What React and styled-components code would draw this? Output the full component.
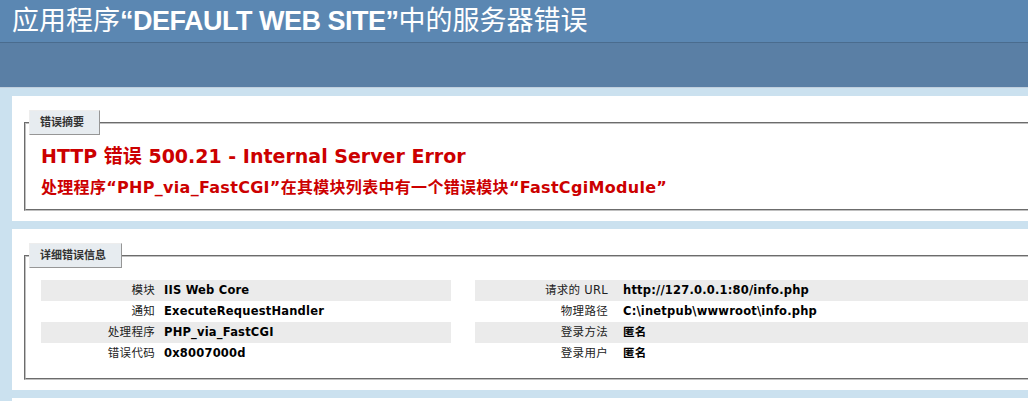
import React from "react";
import styled, { createGlobalStyle } from "styled-components";

const GlobalStyle = createGlobalStyle`
  html, body {
    margin: 0;
    padding: 0;
    overflow: hidden;
  }
  body {
    background: #cbe1ef;
    font-family: "DejaVu Sans", Verdana, "Noto Sans CJK SC", sans-serif;
    font-size: 11px;
  }
`;

const Page = styled.div`
  width: 1260px;
  padding-bottom: 20px;
`;

const Header = styled.div`
  background-color: #5b87b2;
  padding: 6px 12px;
  color: #fff;
`;

const Title = styled.h1`
  margin: 0;
  font-family: "Liberation Sans", "Noto Sans CJK SC", sans-serif;
  font-size: 27px;
  line-height: 30px;
  font-weight: normal;
`;

const Latin = styled.span`
  font-weight: bold;
  letter-spacing: -0.5px;
`;

const ServerVersion = styled.div`
  height: 44px;
  background-color: #5a7fa5;
  border-top: 1px solid #4a6c8e;
  border-bottom: 1px solid #c1cfdd;
`;

const Content = styled.div`
  margin-left: 12px;
`;

const Container = styled.div`
  background: #fff;
  width: 1200px;
  margin-top: 8px;
  padding: 10px;
`;

const Fieldset = styled.fieldset`
  margin: 4px 2px 0;
  padding: 0 15px ${({ $bottom }) => $bottom}px 15px;
  border: 2px groove #c0c0c0;
  min-width: 0;
`;

const Legend = styled.legend`
  color: #333;
  padding: 4px 15px 4px 10px;
  margin: 0 0 0 -12px;
  line-height: 15px;
  border-top: 1px solid #ededed;
  border-left: 1px solid #ededed;
  border-right: 1px solid #969696;
  border-bottom: 1px solid #969696;
  background: #e7ecf0;
  font-weight: bold;
  font-size: 11px;
`;

const Body = styled.div`
  padding-top: 8px;
`;

const ErrorTitle = styled.h2`
  margin: 0;
  font-size: 19px;
  line-height: 26px;
  color: #cc0000;
`;

const ErrorText = styled.h3`
  margin: 7px 0 0;
  font-size: 16px;
  line-height: 24px;
  letter-spacing: 0.3px;
  color: #cc0000;
`;

const Details = styled.div`
  display: flex;
  gap: 24px;
  margin: 4px 0;
`;

const Column = styled.div`
  width: ${({ $width }) => $width}px;
  flex: none;
`;

const Row = styled.div`
  display: flex;
  background: ${({ $alt }) => ($alt ? "#ebebeb" : "transparent")};
  padding: 3px 0;
  line-height: 15px;
`;

const Label = styled.div`
  width: ${({ $width }) => $width}px;
  flex: none;
  box-sizing: border-box;
  padding-right: ${({ $pad }) => $pad}px;
  text-align: right;
  color: #222;
  font-size: 11.5px;
  letter-spacing: 0.3px;
  white-space: nowrap;
`;

const Value = styled.div`
  font-size: 11.5px;
  font-weight: bold;
  letter-spacing: 0.2px;
  color: #000;
  white-space: nowrap;
`;

const leftRows = [
  ["模块", "IIS Web Core"],
  ["通知", "ExecuteRequestHandler"],
  ["处理程序", "PHP_via_FastCGI"],
  ["错误代码", "0x8007000d"],
];

const rightRows = [
  ["请求的 URL", "http://127.0.0.1:80/info.php"],
  ["物理路径", "C:\\inetpub\\wwwroot\\info.php"],
  ["登录方法", "匿名"],
  ["登录用户", "匿名"],
];

const DetailTable = ({ rows, width, labelWidth, pad }) => (
  <Column $width={width}>
    {rows.map(([label, value], i) => (
      <Row key={label} $alt={i % 2 === 0}>
        <Label $width={labelWidth} $pad={pad}>{label}</Label>
        <Value>{value}</Value>
      </Row>
    ))}
  </Column>
);

export default function App() {
  return (
    <Page>
      <GlobalStyle />
      <Header>
        <Title>
          应用程序<Latin>“DEFAULT WEB SITE”</Latin>中的服务器错误
        </Title>
      </Header>
      <ServerVersion />
      <Content>
        <Container>
          <Fieldset $bottom={9}>
            <Legend>错误摘要</Legend>
            <Body>
              <ErrorTitle>HTTP 错误 500.21 - Internal Server Error</ErrorTitle>
              <ErrorText>处理程序“PHP_via_FastCGI”在其模块列表中有一个错误模块“FastCgiModule”</ErrorText>
            </Body>
          </Fieldset>
        </Container>
        <Container>
          <Fieldset $bottom={10}>
            <Legend>详细错误信息</Legend>
            <Body>
              <Details>
                <DetailTable rows={leftRows} width={410} labelWidth={123} pad={9} />
                <DetailTable rows={rightRows} width={738} labelWidth={148} pad={15} />
              </Details>
            </Body>
          </Fieldset>
        </Container>
        <Container />
      </Content>
    </Page>
  );
}
